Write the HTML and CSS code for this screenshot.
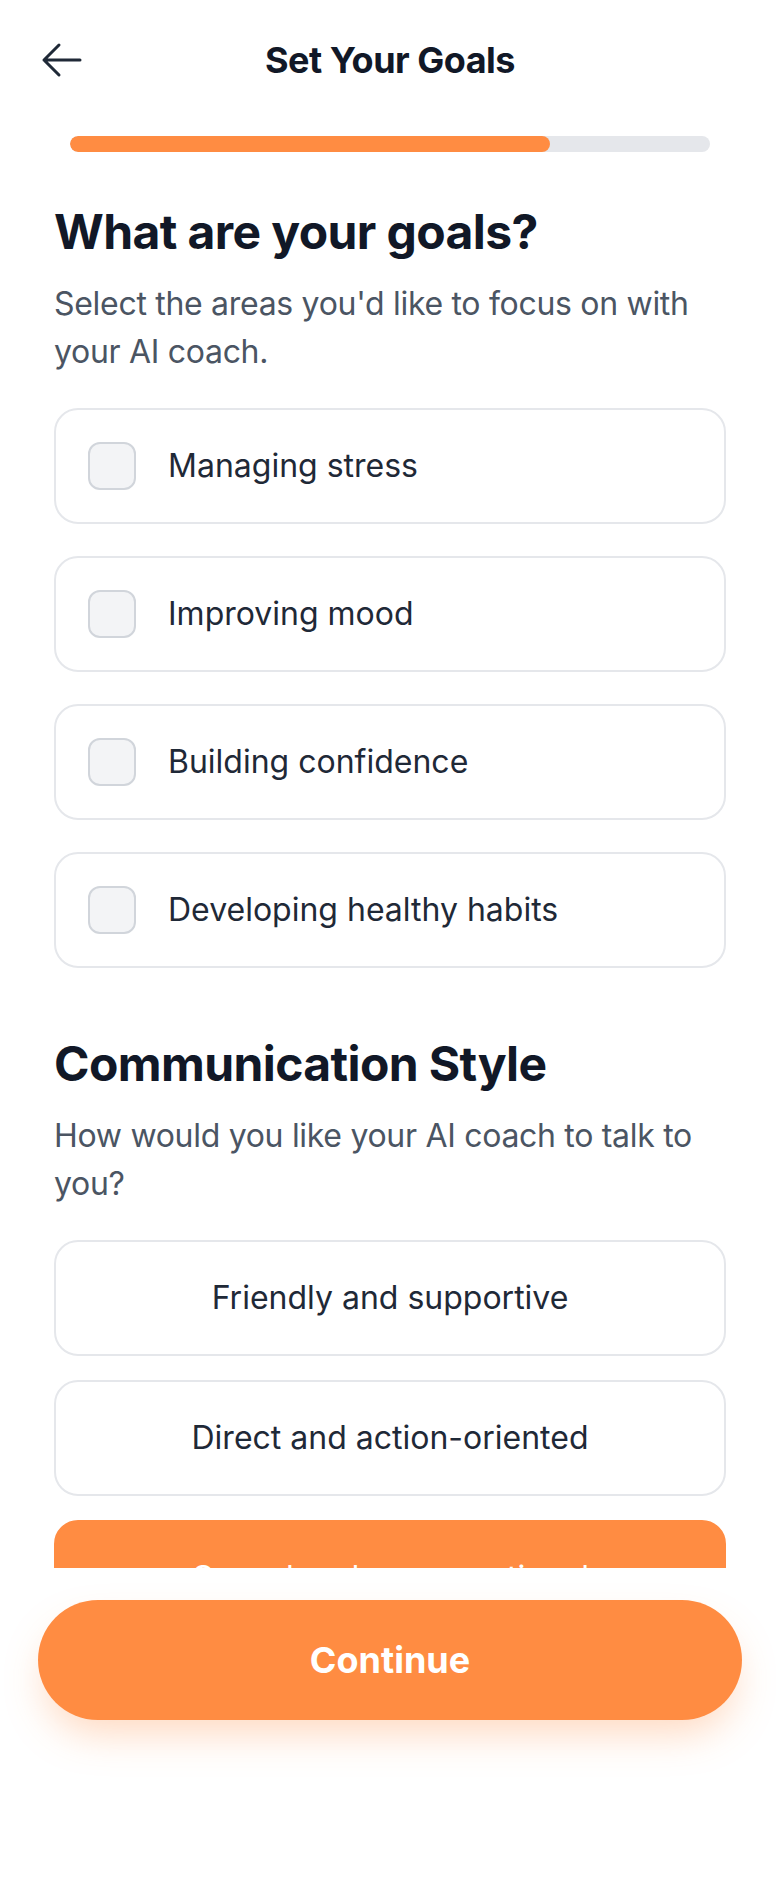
FILE: index.html
```html
<!DOCTYPE html>
<html lang="en">
<head>
<meta charset="utf-8">
<title>Set Your Goals</title>
<link rel="stylesheet" href="styles.css">
</head>
<body>
<div class="app">
  <header class="header">
    <button class="back" aria-label="Back">
      <svg viewBox="0 0 24 24" width="48" height="48" fill="none" stroke="currentColor" stroke-width="1.5" stroke-linecap="round" stroke-linejoin="round"><path d="M10.5 19.5 3 12m0 0 7.5-7.5M3 12h18"/></svg>
    </button>
    <h1 class="title">Set Your Goals</h1>
    <span class="spacer"></span>
  </header>
  <div class="progress"><div class="progress-fill" style="width:75%"></div></div>
  <main class="content">
    <section class="section">
      <h2 class="heading">What are your goals?</h2>
      <p class="sub">Select the areas you'd like to focus on with your AI coach.</p>
      <div class="list">
        <div class="option"><span class="check"></span><span class="label">Managing stress</span></div>
        <div class="option"><span class="check"></span><span class="label">Improving mood</span></div>
        <div class="option"><span class="check"></span><span class="label">Building confidence</span></div>
        <div class="option"><span class="check"></span><span class="label">Developing healthy habits</span></div>
      </div>
    </section>
    <section class="section section-2">
      <h2 class="heading">Communication Style</h2>
      <p class="sub">How would you like your AI coach to talk to you?</p>
      <div class="list list-tight">
        <div class="style">Friendly and supportive</div>
        <div class="style">Direct and action-oriented</div>
        <div class="style selected">Casual and conversational</div>
      </div>
    </section>
  </main>
  <footer class="footer">
    <button class="continue">Continue</button>
  </footer>
</div>
</body>
</html>
```
FILE: styles.css
```css
* { box-sizing: border-box; }
html, body { margin: 0; padding: 0; background: #ffffff; }
body {
  font-family: Inter, "Noto Sans", "Liberation Sans", sans-serif;
  color: #111827;
}
.app {
  width: 780px;
  height: 1886px;
  display: flex;
  flex-direction: column;
  overflow: hidden;
}
.header {
  height: 120px;
  flex: none;
  display: flex;
  align-items: center;
  justify-content: space-between;
  padding: 0 38px;
}
.back {
  width: 48px;
  height: 48px;
  padding: 0;
  border: 0;
  background: none;
  color: #1f2937;
  display: flex;
}
.spacer { width: 48px; height: 48px; }
.title {
  margin: 0;
  font-size: 36px;
  font-weight: 700;
  letter-spacing: -0.5px;
  color: #111827;
}
.progress {
  flex: none;
  margin: 16px 70px 0;
  height: 16px;
  border-radius: 8px;
  background: #e5e7eb;
  overflow: hidden;
}
.progress-fill {
  height: 100%;
  background: #ff8c42;
  border-radius: 8px;
}
.content {
  flex: 1;
  overflow: hidden;
  padding: 48px 54px 0;
}
.section-2 { margin-top: 64px; }
.heading {
  margin: 0;
  font-size: 48px;
  line-height: 64px;
  font-weight: 700;
  letter-spacing: -0.6px;
  color: #111827;
}
.sub {
  margin: 16px 0 32px;
  font-size: 32px;
  line-height: 48px;
  font-weight: 400;
  color: #4b5563;
  letter-spacing: -0.3px;
}
.list {
  display: flex;
  flex-direction: column;
  gap: 32px;
}
.list-tight { gap: 24px; }
.option {
  display: flex;
  align-items: center;
  gap: 32px;
  padding: 32px;
  border: 2px solid #e5e7eb;
  border-radius: 24px;
  background: #fff;
}
.check {
  width: 48px;
  height: 48px;
  flex: none;
  border: 2px solid #d1d5db;
  border-radius: 12px;
  background: #f3f4f6;
}
.label {
  font-size: 32px;
  line-height: 48px;
  font-weight: 400;
  color: #1f2937;
  letter-spacing: 0;
}
.style {
  padding: 32px;
  border: 2px solid #e5e7eb;
  border-radius: 24px;
  text-align: center;
  font-size: 32px;
  line-height: 48px;
  font-weight: 400;
  color: #1f2937;
  letter-spacing: 0;
  background: #fff;
}
.style.selected {
  background: #ff8c42;
  border-color: #ff8c42;
  color: #ffffff;
}
.footer {
  flex: none;
  height: 318px;
  padding: 32px 38px 0;
  background: #fff;
}
.continue {
  width: 100%;
  height: 120px;
  border: 0;
  border-radius: 60px;
  background: #ff8c42;
  color: #ffffff;
  font-family: inherit;
  font-size: 36px;
  font-weight: 700;
  box-shadow: 0 20px 40px -8px rgba(255, 140, 66, 0.35);
}
```
